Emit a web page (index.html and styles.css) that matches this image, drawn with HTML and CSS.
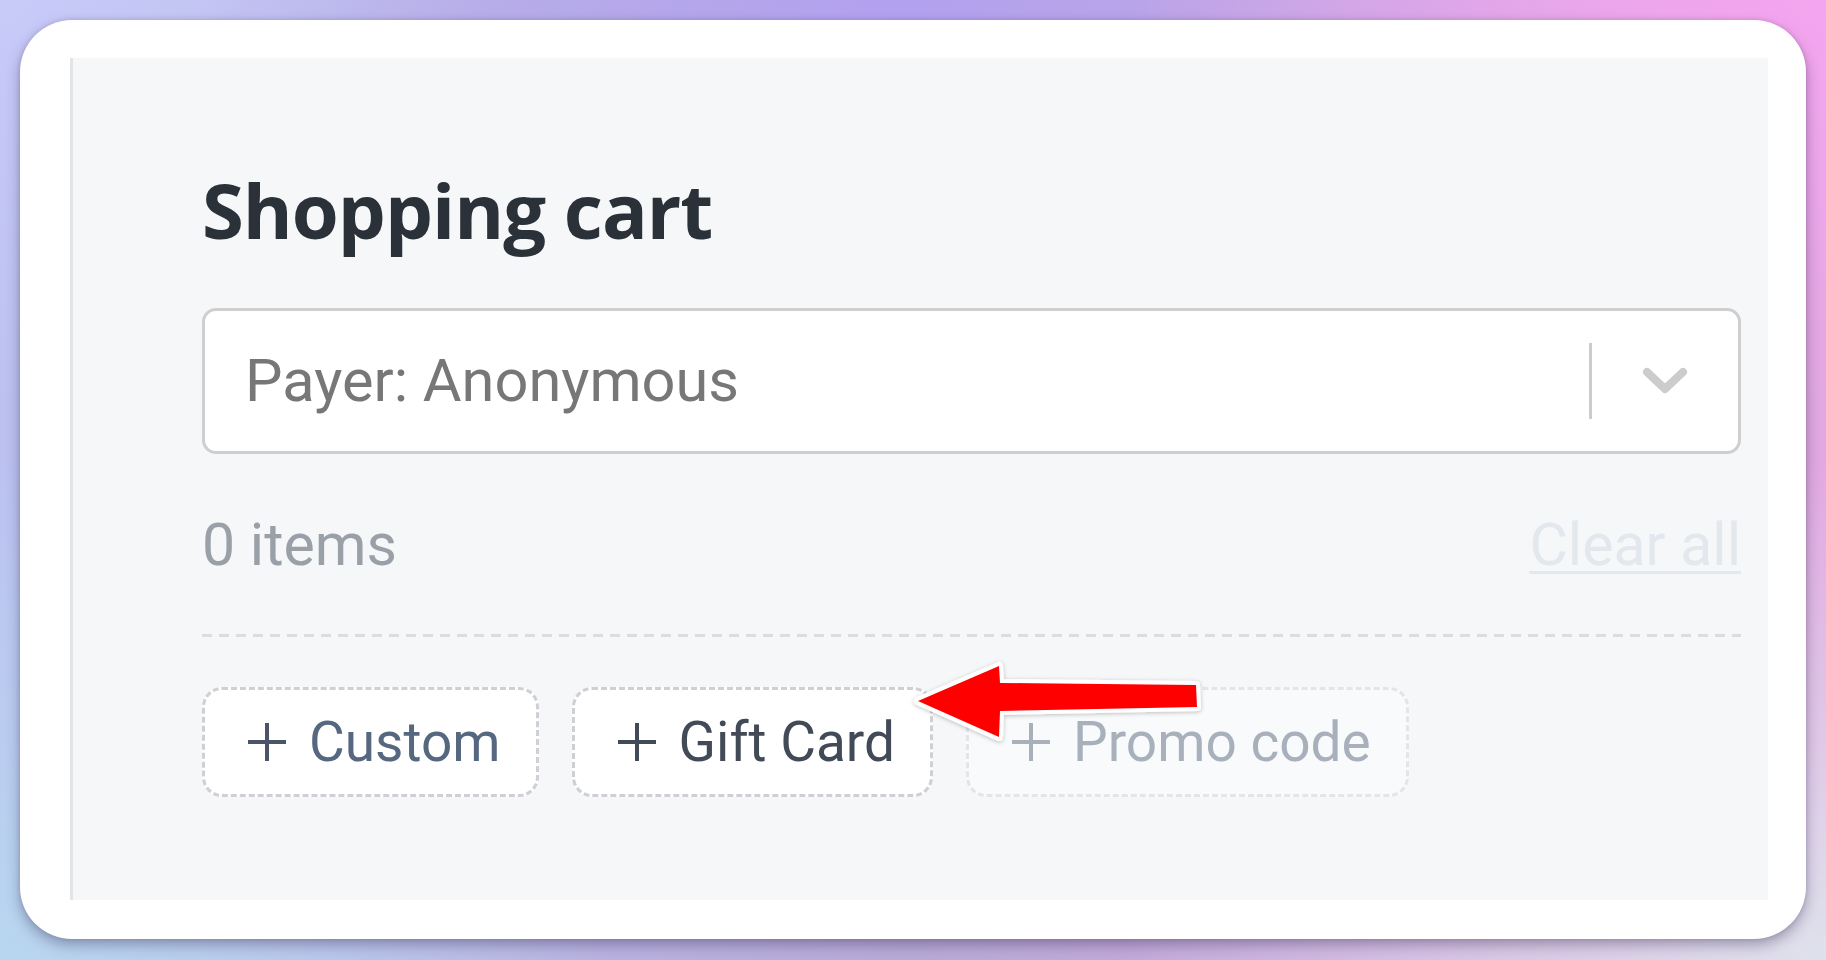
FILE: index.html
```html
<!DOCTYPE html>
<html lang="en">
<head>
<meta charset="utf-8">
<title>Shopping cart</title>
<link rel="stylesheet" href="styles.css">
</head>
<body>
<div class="frame">
  <div class="card">
    <div class="panel">
      <h1 class="title">Shopping cart</h1>
      <div class="select">
        <span class="select-value">Payer: Anonymous</span>
        <span class="select-sep"></span>
        <span class="select-chevron">
          <svg width="48" height="30" viewBox="0 0 48 30"><polyline points="6,6 24,23 42,6" fill="none" stroke="#cccccc" stroke-width="8" stroke-linecap="round" stroke-linejoin="round"/></svg>
        </span>
      </div>
      <div class="items-row">
        <span class="items-count">0 items</span>
        <a class="clear-all">Clear all</a>
      </div>
      <div class="dash-line"></div>
      <div class="actions">
        <button class="add-btn btn-custom"><svg class="plus" width="42" height="42" viewBox="0 0 42 42"><path d="M21 2V40M2 21H40" stroke="currentColor" stroke-width="4"/></svg><span>Custom</span></button>
        <button class="add-btn btn-gift"><svg class="plus" width="42" height="42" viewBox="0 0 42 42"><path d="M21 2V40M2 21H40" stroke="currentColor" stroke-width="4"/></svg><span>Gift Card</span></button>
        <button class="add-btn btn-promo"><svg class="plus" width="42" height="42" viewBox="0 0 42 42"><path d="M21 2V40M2 21H40" stroke="currentColor" stroke-width="4"/></svg><span>Promo code</span></button>
      </div>
    </div>
    <svg class="arrow" width="320" height="120" viewBox="0 0 320 120">
      <defs>
        <filter id="sh" x="-20%" y="-40%" width="140%" height="180%">
          <feDropShadow dx="0" dy="1" stdDeviation="2" flood-color="#000" flood-opacity="0.25"/>
        </filter>
      </defs>
      <polygon points="18,60 99,25 100,42 296,44 297,66 100,70 99,96" fill="#ff0000" stroke="#ffffff" stroke-width="8" stroke-linejoin="round" paint-order="stroke" filter="url(#sh)"/>
    </svg>
  </div>
</div>
</body>
</html>
```

FILE: styles.css
```css
html, body {
  margin: 0;
  padding: 0;
}
body {
  width: 1826px;
  height: 960px;
  overflow: hidden;
  background:
    radial-gradient(ellipse 700px 400px at 1826px 0px, rgba(245,165,240,0.95), rgba(245,165,240,0) 100%),
    radial-gradient(ellipse 700px 380px at 900px 0px, rgba(178,160,242,0.9), rgba(178,160,242,0) 100%),
    radial-gradient(ellipse 500px 400px at 0px 0px, rgba(200,202,248,1), rgba(200,202,248,0) 100%),
    radial-gradient(ellipse 600px 500px at 0px 960px, rgba(184,214,240,1), rgba(184,214,240,0) 100%),
    radial-gradient(ellipse 700px 500px at 1826px 960px, rgba(222,226,236,1), rgba(222,226,236,0) 100%),
    linear-gradient(90deg, #bcc2f0 0%, #b8aad8 50%, #e2a8e2 100%);
  font-family: Roboto, "Liberation Sans", sans-serif;
}
.frame {
  padding: 20px 20px 21px 20px;
}
.card {
  position: relative;
  height: 919px;
  box-sizing: border-box;
  background: #ffffff;
  border-radius: 52px;
  padding: 38px 38px 39px 50px;
  box-shadow: 0 6px 14px rgba(40, 30, 70, 0.35), 0 0 4px rgba(40,30,70,0.15);
}
.panel {
  height: 100%;
  box-sizing: border-box;
  background: #f6f7f9;
  border-left: 3px solid #e3e4e8;
  padding: 114px 27px 0 129px;
  display: flex;
  flex-direction: column;
}
.title {
  margin: 0;
  font-family: "Open Sans", "DejaVu Sans", sans-serif;
  font-weight: 700;
  font-size: 76px;
  letter-spacing: -1px;
  line-height: 76px;
  color: #2b3139;
}
.select {
  margin-top: 60px;
  height: 146px;
  box-sizing: border-box;
  background: #ffffff;
  border: 3px solid #cfcfcf;
  border-radius: 14px;
  display: flex;
  align-items: center;
  padding-left: 40px;
}
.select-value {
  flex: 1;
  font-size: 59.5px;
  color: #777777;
}
.select-sep {
  width: 3px;
  height: 76px;
  background: #cccccc;
}
.select-chevron {
  width: 146px;
  display: flex;
  justify-content: center;
  align-items: center;
}
.items-row {
  margin-top: 57px;
  display: flex;
  justify-content: space-between;
  align-items: baseline;
  font-size: 59px;
  line-height: 68px;
}
.items-count {
  color: #9aa0a7;
}
.clear-all {
  color: #e3e8ef;
  text-decoration: underline;
  text-decoration-thickness: 3px;
  text-underline-offset: 6px;
}
.dash-line {
  margin-top: 55px;
  height: 3px;
  background: repeating-linear-gradient(90deg, #dcdde1 0 10px, transparent 10px 17px);
}
.actions {
  margin-top: 50px;
  display: flex;
  gap: 33px;
}
.add-btn {
  height: 110px;
  box-sizing: border-box;
  background: #ffffff;
  border: 3px dashed #cfd0d4;
  border-radius: 20px;
  padding: 0 35px 0 41px;
  display: flex;
  align-items: center;
  gap: 21px;
  font-family: Roboto, "Liberation Sans", sans-serif;
  font-size: 55px;
  line-height: 64px;
}
.plus {
  flex: none;
}
.btn-custom {
  color: #566780;
}
.btn-custom .plus {
  color: #4b5567;
}
.btn-gift {
  color: #424a58;
}
.btn-promo {
  color: #a8b0bc;
  background: #f9fafb;
  border-color: #e4e5e8;
}
.arrow {
  position: absolute;
  left: 880px;
  top: 621px;
}
```
